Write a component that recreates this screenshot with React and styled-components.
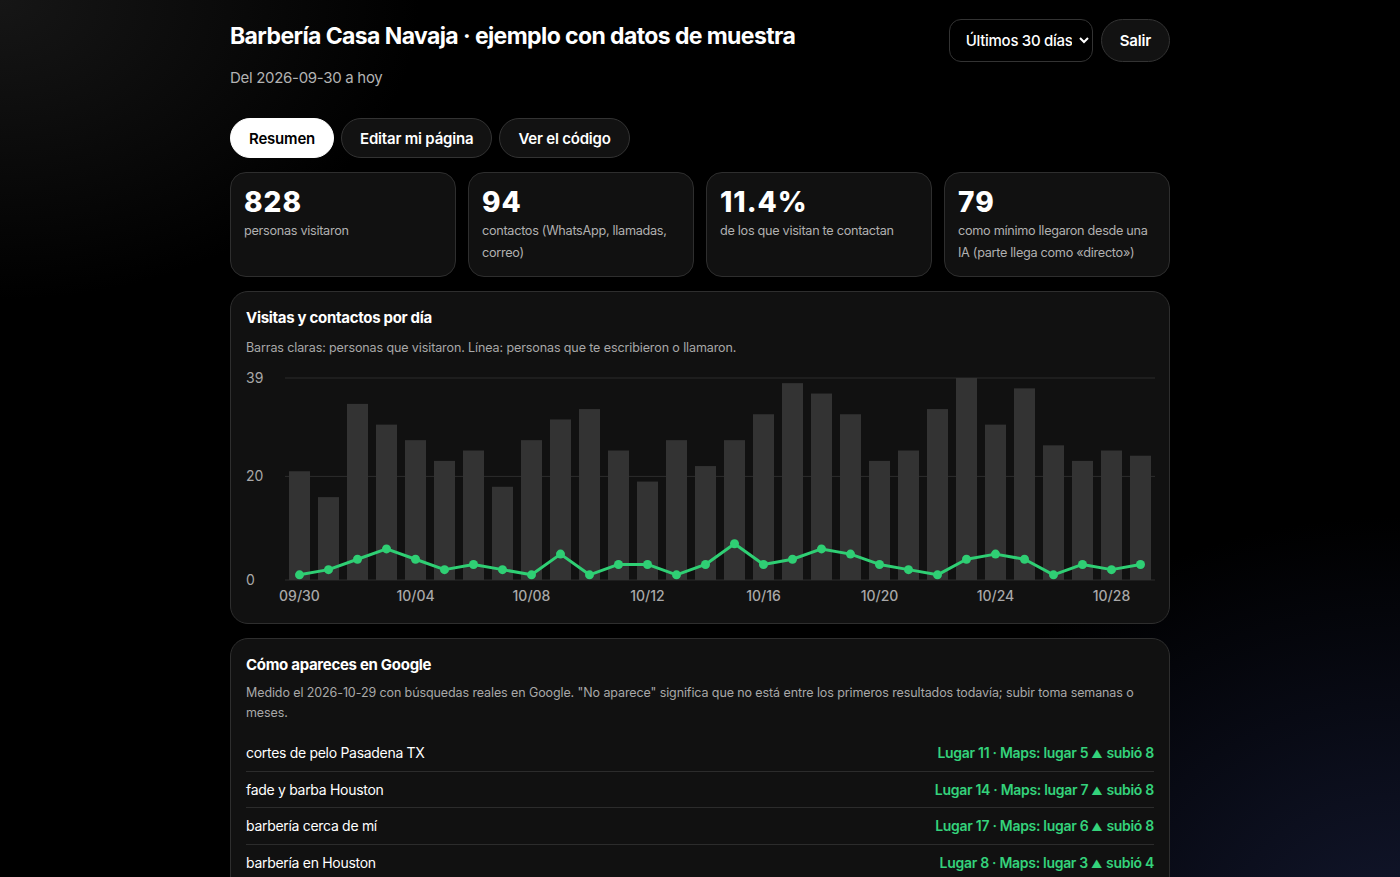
import React from 'react'
import styled, { createGlobalStyle } from 'styled-components'

const GlobalStyle = createGlobalStyle`
  html, body {
    margin: 0;
    padding: 0;
    background: #000;
  }
  body {
    font-family: Inter, "Noto Sans", sans-serif;
    color: #fff;
    -webkit-font-smoothing: antialiased;
  }
  * { box-sizing: border-box; }
`

const Page = styled.div`
  min-height: 100vh;
  background:
    radial-gradient(ellipse 420px 300px at 0% 0%, rgba(40, 40, 40, 0.55), transparent 100%),
    radial-gradient(ellipse 520px 420px at 100% 100%, rgba(24, 30, 60, 0.75), transparent 100%),
    #000;
  padding: 19px 0 40px;
`

const Wrap = styled.main`
  width: 940px;
  margin: 0 auto;
  display: flex;
  flex-direction: column;
`

const Header = styled.header`
  display: flex;
  justify-content: space-between;
  align-items: flex-start;
`

const Title = styled.h1`
  margin: 2px 0 0;
  font-size: 23px;
  font-weight: 700;
  letter-spacing: -0.6px;
  line-height: 30px;
`

const Sub = styled.p`
  margin: 17px 0 0;
  font-size: 15px;
  line-height: 20px;
  color: #b3b3b3;
  letter-spacing: -0.3px;
`

const Controls = styled.div`
  display: flex;
  gap: 8px;
`

const RangeSelect = styled.select`
  height: 43px;
  width: 144px;
  padding: 0 4px 0 12px;
  border-radius: 12px;
  border: 1px solid #333;
  background: #000;
  color: #fff;
  font: 500 15px Inter, sans-serif;
  letter-spacing: -0.3px;
  color-scheme: dark;
  outline: none;
`

const Pill = styled.button`
  height: ${({ $h }) => $h || 40}px;
  padding: 0 18px;
  border-radius: 999px;
  border: 1px solid ${({ $active }) => ($active ? '#fff' : '#333')};
  background: ${({ $active }) => ($active ? '#fff' : '#121212')};
  color: ${({ $active }) => ($active ? '#000' : '#fff')};
  font: 600 15px Inter, sans-serif;
  letter-spacing: -0.2px;
  cursor: pointer;
`

const Tabs = styled.nav`
  display: flex;
  gap: 7px;
  margin-top: 30px;
`

const Stats = styled.section`
  display: grid;
  grid-template-columns: repeat(4, 1fr);
  gap: 12px;
  margin-top: 14px;
`

const Card = styled.div`
  background: #111;
  border: 1px solid #2e2e2e;
  border-radius: ${({ $r }) => $r || 16}px;
  padding: ${({ $pad }) => $pad || '12px 13px'};
`

const StatNum = styled.div`
  font-size: 28px;
  font-weight: 800;
  letter-spacing: 1px;
  line-height: 34px;
`

const StatLabel = styled.div`
  margin-top: 1px;
  font-size: 12.7px;
  line-height: 22px;
  color: #b0b0b0;
  letter-spacing: -0.3px;
  min-height: 44px;
`

const Section = styled(Card)`
  margin-top: 14px;
`

const CardTitle = styled.h2`
  margin: 0;
  font-size: 15px;
  font-weight: 700;
  letter-spacing: -0.3px;
  line-height: 20px;
`

const CardNote = styled.p`
  margin: ${({ $m }) => $m || '10px 0 0'};
  font-size: 12.5px;
  line-height: 20px;
  color: #a8a8a8;
  letter-spacing: -0.1px;
`

const Chart = styled.svg`
  display: block;
  margin-top: 8px;
`

const Rows = styled.ul`
  list-style: none;
  margin: 12px 0 0;
  padding: 0;
`

const Row = styled.li`
  display: flex;
  justify-content: space-between;
  align-items: center;
  height: 36.5px;
  border-bottom: 1px solid #2c2c2c;
  font-size: 14px;
  letter-spacing: -0.3px;
`

const Rank = styled.span`
  color: #34d27b;
  font-weight: 600;
`

const Up = styled.span`
  font-size: 11px;
  margin: 0 4px 0 3px;
`

const visits = [21, 16, 34, 30, 27, 23, 25, 18, 27, 31, 33, 25, 19, 27, 22, 27, 32, 38, 36, 32, 23, 25, 33, 39, 30, 37, 26, 23, 25, 24]
const contacts = [1, 2, 4, 6, 4, 2, 3, 2, 1, 5, 1, 3, 3, 1, 3, 7, 3, 4, 6, 5, 3, 2, 1, 4, 5, 4, 1, 3, 2, 3]

const stats = [
  { n: '828', label: 'personas visitaron' },
  { n: '94', label: 'contactos (WhatsApp, llamadas, correo)' },
  { n: '11.4%', label: 'de los que visitan te contactan' },
  { n: '79', label: 'como mínimo llegaron desde una IA (parte llega como «directo»)' },
]

const queries = [
  { q: 'cortes de pelo Pasadena TX', place: 11, maps: 5, up: 8 },
  { q: 'fade y barba Houston', place: 14, maps: 7, up: 8 },
  { q: 'barbería cerca de mí', place: 17, maps: 6, up: 8 },
  { q: 'barbería en Houston', place: 8, maps: 3, up: 4 },
]

const dayLabel = (i) => {
  const d = new Date(2026, 8, 30 + i)
  return `${String(d.getMonth() + 1).padStart(2, '0')}/${String(d.getDate()).padStart(2, '0')}`
}

function DailyChart() {
  const W = 910
  const H = 240
  const x0 = 39
  const x1 = 909
  const top = 12
  const base = 214
  const max = 39
  const slot = (x1 - x0) / visits.length
  const y = (v) => base - (v / max) * (base - top)
  const cx = (i) => x0 + slot * i + slot / 2
  const linePts = contacts.map((v, i) => `${cx(i)},${y(v)}`).join(' ')

  return (
    <Chart width={W} height={H} viewBox={`0 0 ${W} ${H}`}>
      {[max, 20, 0].map((v) => (
        <g key={v}>
          <line x1={x0} x2={x1} y1={y(v)} y2={y(v)} stroke="#2d2d2d" strokeWidth="1" />
          <text x="0" y={y(v) + 5} fill="#a8a8a8" fontSize="14" fontFamily="Inter, sans-serif">{v}</text>
        </g>
      ))}
      {visits.map((v, i) => (
        <rect key={i} x={cx(i) - 10.5} y={y(v)} width="21" height={base - y(v)} fill="#333" />
      ))}
      <polyline points={linePts} fill="none" stroke="#2fcf74" strokeWidth="3" strokeLinejoin="round" />
      {contacts.map((v, i) => (
        <circle key={i} cx={cx(i)} cy={y(v)} r="4.5" fill="#2fcf74" />
      ))}
      {visits.map((_, i) =>
        i % 4 === 0 ? (
          <text key={i} x={cx(i)} y="235" textAnchor="middle" fill="#a8a8a8" fontSize="14" fontWeight="500" fontFamily="Inter, sans-serif">
            {dayLabel(i)}
          </text>
        ) : null
      )}
    </Chart>
  )
}

export default function App() {
  return (
    <Page>
      <GlobalStyle />
      <Wrap>
        <Header>
          <div>
            <Title>Barbería Casa Navaja · ejemplo con datos de muestra</Title>
            <Sub>Del 2026-09-30 a hoy</Sub>
          </div>
          <Controls>
            <RangeSelect defaultValue="30">
              <option value="7">Últimos 7 días</option>
              <option value="30">Últimos 30 días</option>
              <option value="90">Últimos 90 días</option>
            </RangeSelect>
            <Pill $h={43}>Salir</Pill>
          </Controls>
        </Header>

        <Tabs>
          <Pill $active>Resumen</Pill>
          <Pill>Editar mi página</Pill>
          <Pill>Ver el código</Pill>
        </Tabs>

        <Stats>
          {stats.map((s) => (
            <Card key={s.n}>
              <StatNum>{s.n}</StatNum>
              <StatLabel>{s.label}</StatLabel>
            </Card>
          ))}
        </Stats>

        <Section $r={18} $pad="16px 15px 17px">
          <CardTitle>Visitas y contactos por día</CardTitle>
          <CardNote>Barras claras: personas que visitaron. Línea: personas que te escribieron o llamaron.</CardNote>
          <DailyChart />
        </Section>

        <Section $r={18} $pad="16px 15px 14px">
          <CardTitle>Cómo apareces en Google</CardTitle>
          <CardNote $m="8px 0 0">
            Medido el 2026-10-29 con búsquedas reales en Google. "No aparece" significa que no está entre los primeros resultados todavía; subir toma semanas o meses.
          </CardNote>
          <Rows>
            {queries.map((q) => (
              <Row key={q.q}>
                <span>{q.q}</span>
                <Rank>
                  Lugar {q.place} · Maps: lugar {q.maps}
                  <Up>▲</Up>subió {q.up}
                </Rank>
              </Row>
            ))}
          </Rows>
        </Section>
      </Wrap>
    </Page>
  )
}
